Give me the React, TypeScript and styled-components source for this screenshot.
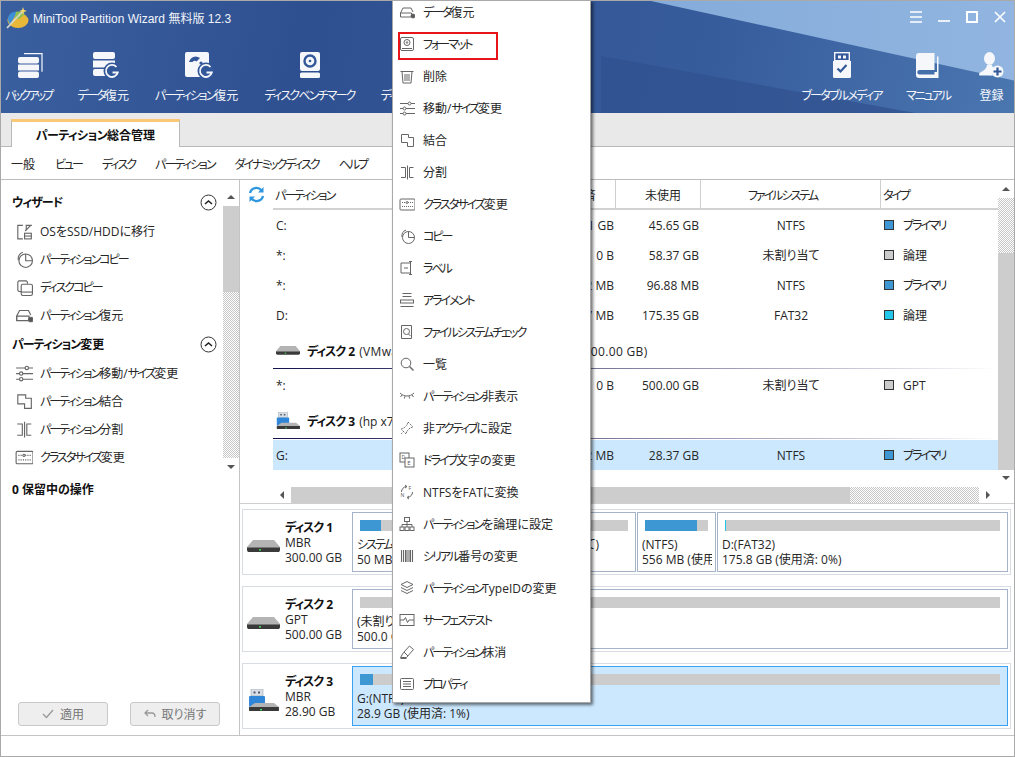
import React from 'react';
import styled, { createGlobalStyle } from 'styled-components';

const GlobalStyle = createGlobalStyle`
  html, body { margin: 0; padding: 0; background: #fff; }
  body {
    font-family: "Open Sans", "Noto Sans CJK JP", sans-serif;
    font-size: 12px;
    color: #262626;
    font-feature-settings: "palt";
  }
  * { box-sizing: border-box; }
`;

// the reference font sets katakana much narrower than any installed one
const Kana = styled.span`
  letter-spacing: var(--kana, -2px);
`;

const T = ({ children }: { children: string }) => (
  <>
    {children.split(/([\u30A0-\u30FF]+)/).map((part, i) =>
      i % 2 ? <Kana key={i}>{part}</Kana> : part
    )}
  </>
);

const Window = styled.div`
  position: relative;
  width: 1015px;
  height: 757px;
  border: 1px solid #a9a9a9;
  display: flex;
  flex-direction: column;
  overflow: hidden;
  background: #fff;
`;

/* header */
const Header = styled.header`
  position: relative;
  height: 112px;
  flex: none;
  color: #fff;
  background: linear-gradient(100deg, #3a5f9f 0%, #2f5090 30%, #375c9c 70%, #4a76b0 100%);
  overflow: hidden;
  &::before {
    content: '';
    position: absolute;
    inset: 0;
    background: linear-gradient(90deg, #6e9acf, #91b5e0);
    clip-path: polygon(650px 0, 1015px 0, 1015px 80px);
  }
  &::after {
    content: '';
    position: absolute;
    inset: 0;
    background: #31518f;
    opacity: 0.75;
    clip-path: polygon(600px 55px, 920px 113px, 600px 113px);
  }
`;

const TitleBar = styled.div`
  position: relative;
  z-index: 1;
  height: 32px;
  display: flex;
  align-items: center;
  padding: 0 8px 0 5px;
`;

const AppTitle = styled.span`
  margin-left: 4px;
  font-family: "Liberation Sans", "Noto Sans CJK JP", sans-serif;
  font-size: 12px;
  color: #f2f5fa;
`;

const WindowButtons = styled.div`
  margin-left: auto;
  display: flex;
  align-items: center;
  gap: 16px;
`;

const Toolbar = styled.div`
  position: relative;
  z-index: 1;
  margin-top: 18px;
  display: flex;
  padding: 0 10px 0 4px;
`;

const ToolGroup = styled.div<{ $right?: boolean }>`
  display: flex;
  gap: ${p => (p.$right ? 24 : 26)}px;
  margin-left: ${p => (p.$right ? 'auto' : '0')};
`;

const ToolItem = styled.div<{ $ml?: number }>`
  display: flex;
  flex-direction: column;
  align-items: center;
  margin-left: ${p => p.$ml ?? 0}px;
`;

const ToolIconBox = styled.div<{ $nudge?: number }>`
  height: 28px;
  display: flex;
  align-items: center;
  justify-content: center;
  margin-bottom: 8px;
  padding-left: ${p => (p.$nudge ?? 0) * 2}px;
`;

const ToolLabel = styled.span<{ $kana?: number }>`
  line-height: 18px;
  white-space: nowrap;
  color: #f4f6fa;
  ${p => (p.$kana !== undefined ? `--kana: ${p.$kana}px;` : '')}
`;

/* tabs and menu */
const TabBar = styled.div`
  height: 34px;
  flex: none;
  display: flex;
  align-items: flex-end;
  background: #e9e9e9;
  border-bottom: 1px solid #b9b9b9;
  padding-left: 10px;
`;

const Tab = styled.div`
  --kana: -0.6px;
  width: 169px;
  height: 28px;
  margin-bottom: -1px;
  display: flex;
  align-items: center;
  justify-content: center;
  font-weight: 700;
  color: #111;
  background: #fff;
  border: 1px solid #b9b9b9;
  border-bottom: 0;
  border-top: 3px solid #fbc976;
`;

const MenuBar = styled.nav`
  height: 33px;
  flex: none;
  display: flex;
  align-items: center;
  gap: 20px;
  padding: 1px 0 0 10px;
  border-bottom: 1px solid #bdbdbd;
`;

/* body */
const Body = styled.div`
  flex: 1;
  display: flex;
  min-height: 0;
`;

const Sidebar = styled.aside`
  width: 239px;
  flex: none;
  display: flex;
  flex-direction: column;
  border-right: 1px solid #c4c4c4;
`;

const SideScroll = styled.div`
  height: 295px;
  flex: none;
  display: flex;
  padding-top: 8px;
`;

const SideList = styled.div`
  flex: 1;
  min-width: 0;
`;

const SideRow = styled.div`
  height: 28px;
  display: flex;
  align-items: center;
  gap: 7px;
  padding-left: 14px;
  white-space: nowrap;
`;

const SideTitle = styled.div`
  --kana: -1px;
  height: 29px;
  display: flex;
  align-items: center;
  justify-content: space-between;
  padding: 0 6px 1px 11px;
  font-weight: 700;
  color: #111;
  ${SideRow} + & {
    margin-top: 1px;
  }
`;

const Pending = styled.div`
  --kana: -1px;
  height: 28px;
  display: flex;
  align-items: center;
  padding-left: 11px;
  font-weight: 700;
  color: #111;
`;

const ActionRow = styled.div`
  margin-top: auto;
  display: flex;
  gap: 22px;
  padding: 0 0 9px 17px;
`;

const ActionButton = styled.div`
  width: 90px;
  height: 24px;
  display: flex;
  align-items: center;
  justify-content: center;
  gap: 6px;
  background: #eee;
  border: 1px solid #c9c9c9;
  border-radius: 3px;
  color: #777;
`;

/* scrollbars */
const VBar = styled.div`
  width: 16px;
  flex: none;
  display: flex;
  flex-direction: column;
  align-items: stretch;
`;

const HBar = styled.div`
  height: 16px;
  flex: none;
  display: flex;
  margin-left: 33px;
`;

const Solid = styled.div<{ $size: number; $h?: boolean }>`
  flex: none;
  ${p => (p.$h ? `width: ${p.$size}px;` : `height: ${p.$size}px;`)}
  background: #cdcdcd;
`;

const Dither = styled.div<{ $size: number; $h?: boolean }>`
  flex: none;
  ${p => (p.$h ? `width: ${p.$size}px;` : `height: ${p.$size}px;`)}
  background: repeating-conic-gradient(#c6c6c6 0 25%, #fff 0 50%) 0 0 / 2px 2px;
`;

const ArrowBox = styled.div<{ $size: number; $h?: boolean }>`
  flex: none;
  display: flex;
  align-items: center;
  justify-content: center;
  ${p => (p.$h ? `width: ${p.$size}px;` : `height: ${p.$size}px;`)}
`;

const Arrow = styled.i<{ $dir: 'up' | 'down' | 'left' | 'right' }>`
  display: block;
  width: 0;
  height: 0;
  border-style: solid;
  border-color: transparent;
  ${p => p.$dir === 'up' && 'border-width: 0 4px 4px; border-bottom-color: #555;'}
  ${p => p.$dir === 'down' && 'border-width: 4px 4px 0; border-top-color: #555;'}
  ${p => p.$dir === 'left' && 'border-width: 4px 4px 4px 0; border-right-color: #555;'}
  ${p => p.$dir === 'right' && 'border-width: 4px 0 4px 4px; border-left-color: #555;'}
`;

/* main */
const Main = styled.main`
  flex: 1;
  min-width: 0;
  display: flex;
  flex-direction: column;
`;

const TableSection = styled.section`
  height: 324px;
  flex: none;
  display: flex;
  flex-direction: column;
  border-bottom: 1px solid #cfcfcf;
`;

const TableWrap = styled.div`
  flex: 1;
  display: flex;
  min-height: 0;
`;

const Table = styled.div`
  flex: 1;
  min-width: 0;
  position: relative;
  padding-left: 33px;
`;

const RefreshSlot = styled.div`
  position: absolute;
  left: 8px;
  top: 6px;
`;

const columns = '190px 75px 78px 85px 180px 1fr';

const HeadRow = styled.div`
  display: grid;
  grid-template-columns: ${columns};
  height: 30px;
  border-bottom: 2px solid #d2d2d2;
`;

const HeadCell = styled.div<{ $line?: boolean; $pl?: number; $pr?: number; $center?: boolean }>`
  display: flex;
  align-items: center;
  justify-content: ${p => (p.$center ? 'center' : 'flex-start')};
  padding: 2px ${p => p.$pr ?? 0}px 0 ${p => p.$pl ?? 2}px;
  border-right: ${p => (p.$line ? '1px solid #cfcfcf' : '0')};
  white-space: nowrap;
`;

const Row = styled.div<{ $selected?: boolean }>`
  display: grid;
  grid-template-columns: ${columns};
  height: 30px;
  align-items: center;
  background: ${p => (p.$selected ? '#cce8ff' : 'transparent')};
`;

const Cell = styled.div<{ $align?: string; $pr?: number; $pl?: number }>`
  text-align: ${p => p.$align ?? 'left'};
  padding-right: ${p => p.$pr ?? 0}px;
  padding-left: ${p => p.$pl ?? 0}px;
  white-space: nowrap;
`;

const TypeCell = styled.div`
  display: flex;
  align-items: center;
  gap: 9px;
  padding-left: 3px;
`;

const Swatch = styled.span<{ $color: string }>`
  width: 10px;
  height: 10px;
  background: ${p => p.$color};
  border: 1px solid #333;
`;

const DiskRow = styled.div`
  height: 39px;
  margin-bottom: 1px;
  padding: 3px 0 0 3px;
  display: flex;
  align-items: center;
  gap: 7px;
  white-space: nowrap;
  border-bottom: 1px solid;
  border-image: linear-gradient(90deg, #12124e, #b9b8cc 75%, #fff) 1;
`;

const DiskIconSlot = styled.div`
  width: 24px;
  display: flex;
  justify-content: center;
`;

const DiskName = styled.b`
  --kana: -1px;
  font-weight: 700;
  color: #111;
  margin-right: 4px;
`;

const DiskDetail = styled.span`
  letter-spacing: 0.33px;
`;

const DiskSection = styled.section`
  flex: 1;
  min-height: 0;
  display: flex;
  flex-direction: column;
  gap: 11px;
  padding: 5px 3px 0 2px;
`;

const DiskCard = styled.div`
  height: 66px;
  flex: none;
  display: flex;
  border: 1px solid #d8dde3;
  padding: 2px;
`;

const DiskInfo = styled.div`
  width: 107px;
  flex: none;
  display: flex;
  align-items: center;
  gap: 5px;
  padding-left: 2px;
`;

const DiskIconBox = styled.div`
  width: 33px;
  display: flex;
  justify-content: center;
  padding-top: 8px;
`;

const DiskText = styled.div`
  line-height: 15px;
  white-space: nowrap;
`;

const Frames = styled.div`
  flex: 1;
  min-width: 0;
  display: flex;
  gap: 1px;
`;

const Frame = styled.div<{ $w?: number; $selected?: boolean }>`
  ${p => (p.$w ? `width: ${p.$w}px; flex: none;` : 'flex: 1; min-width: 0;')}
  height: 60px;
  padding: 7px 7px 0;
  border: 1px solid ${p => (p.$selected ? '#3aa0f0' : '#a5b3c9')};
  background: ${p => (p.$selected ? '#cce8ff' : '#fff')};
`;

const Bar = styled.div`
  height: 11px;
  background: #cccccc;
`;

const BarFill = styled.div<{ $color: string }>`
  height: 100%;
  background: ${p => p.$color};
`;

const FrameText = styled.div`
  margin: 6px -4px 0 -3px;
  line-height: 15px;
  white-space: nowrap;
  overflow: hidden;
`;

const StatusBar = styled.footer`
  height: 21px;
  flex: none;
  border-top: 1px solid #c4c4c4;
`;

/* context menu */
const ContextMenu = styled.div`
  position: absolute;
  left: 391px;
  top: -1px;
  width: 199px;
  height: 703px;
  background: #fff;
  border: 1px solid #a8a8a8;
  box-shadow: 2px 2px 3px rgba(0, 0, 0, 0.55);
  overflow: hidden;
  z-index: 5;
`;

const MenuList = styled.div`
  margin-top: -5px;
`;

const MenuRow = styled.div<{ $marked?: boolean }>`
  position: relative;
  height: 32px;
  display: flex;
  align-items: center;
  gap: 8px;
  padding-left: 6px;
  white-space: nowrap;
  &::after {
    content: '';
    display: ${p => (p.$marked ? 'block' : 'none')};
    position: absolute;
    left: 5px;
    top: 4px;
    width: 96px;
    height: 24px;
    border: 2px solid #e8141c;
  }
`;

/* drawings */
const line = { fill: 'none', stroke: '#666', strokeWidth: 1 };

type IconName =
  | 'migrate' | 'pie' | 'diskcopy' | 'recover' | 'sliders' | 'merge' | 'split' | 'cluster'
  | 'format' | 'trash' | 'label' | 'align' | 'check' | 'search' | 'hide' | 'pin' | 'letter'
  | 'convert' | 'tree' | 'barcode' | 'layers' | 'surface' | 'eraser' | 'props';

const shapes: Record<IconName, React.ReactNode> = {
  migrate: <><path d="M7 3H2.5v12H7M10 7v-4h5" /><path d="M9 8l5-5" /><rect x="8.5" y="10" width="6" height="5" /><path d="M8.5 12.5h6" /></>,
  pie: <><circle cx="9.5" cy="9.5" r="6" /><path d="M9.5 3.5v6h6M3 9a6 6 0 0 1 4-7" /></>,
  diskcopy: <><path d="M6 12H3.5l-1-1V3.5l1-1H10l1 1V5" /><rect x="5.5" y="5.5" width="10" height="10" rx="1.5" /><path d="M5.5 12.5h10" /></>,
  recover: <><path d="M1.5 13V9l2.5-5h8l2 4" /><path d="M1.5 9h11v4h-11z" /><circle cx="14" cy="12" r="2" fill="#555" /></>,
  sliders: <><path d="M1 3.5h15M1 8.5h15M1 13.5h15" /><circle cx="10.5" cy="3.5" r="1.5" fill="#fff" /><circle cx="5.5" cy="8.5" r="1.5" fill="#fff" /><circle cx="5.5" cy="13.5" r="1.5" fill="#fff" /></>,
  merge: <path d="M2.5 2.5h7v3h5v9h-6v-4h-6z" />,
  split: <path d="M2 3.5h4.5v10H2M8.5 1.5v14M14.5 3.5H10.5v10h4" />,
  cluster: <><rect x="1" y="3" width="15" height="11" rx="1" /><path d="M3 6.5h4M9 6.5h5M3 10.5h11" strokeDasharray="1 1" /><circle cx="8" cy="6.5" r="1" /></>,
  format: <><rect x="1.5" y="1.5" width="13" height="13" rx="1.5" /><circle cx="8" cy="6.5" r="3" /><circle cx="8" cy="6.5" r=".8" /><path d="M3 12.5h10" /></>,
  trash: <><path d="M1.5 3.5h13M3 3.5l1 11.5h8l1-11.5M6 6v7M8 6v7M10 6v7" /></>,
  label: <><path d="M11 3H2v10h9M5 8h4" /><path d="M11.5 2v12M10 1.5h3M10 14.5h3" /></>,
  align: <><path d="M3.5 1.5h9M3.5 4.5h9" /><rect x="1.5" y="8" width="13" height="3" /><path d="M1.5 14.5h13" /></>,
  check: <><path d="M2.5 1.5h10v13h-10z" /><circle cx="7.5" cy="7.5" r="3" /><path d="M9.5 10l2 2" /></>,
  search: <><circle cx="7" cy="7" r="4.8" /><path d="M10.5 10.5l4 4" strokeWidth="1.4" /></>,
  hide: <><path d="M1 5c4 4 10 4 14 0" /><path d="M3 7L1.5 9M6 8.2l-.6 2.3M10 8.2l.6 2.3M13 7l1.5 2" /></>,
  pin: <path d="M9 2l5 5-3 1-3 3-1 3-5-5 3-1 3-3zM5 11l-3 3" strokeDasharray="1.5 1" />,
  letter: <><rect x="1" y="1" width="9" height="9" /><rect x="6" y="6" width="9" height="9" fill="#fff" /><text x="2.5" y="6.5" fontSize="5" stroke="none" fill="#555">D</text><text x="8.3" y="13" fontSize="6" stroke="none" fill="#555">E</text></>,
  convert: <><path d="M2.5 8a5.5 5.5 0 0 1 5-5.5M13.5 8a5.5 5.5 0 0 1-5 5.5M6 1l2 1.5L6 4M10 12l-2 1.5 2 1.5" /><text x="9.5" y="6" fontSize="5" stroke="none" fill="#555">F</text><text x="1.5" y="13" fontSize="5" stroke="none" fill="#555">N</text></>,
  tree: <><rect x="5.5" y="1.5" width="5" height="4" /><rect x="1" y="11" width="4" height="3.5" /><rect x="6" y="11" width="4" height="3.5" /><rect x="11" y="11" width="4" height="3.5" /><path d="M8 5.5V11M3 11V8.5h10V11" /></>,
  barcode: <path d="M2.5 2v12M4.5 2v12M6.5 2v12M8 2v12M10 2v12M11.5 2v12M13.5 2v12" strokeWidth="1.1" />,
  layers: <><path d="M8 1.5l6 3-6 3-6-3z" /><path d="M2 7.5l6 3 6-3M2 10.5l6 3 6-3" /></>,
  surface: <><rect x="1" y="2.5" width="14" height="11" /><path d="M1 8h4l1.5-2.5 2 5 1.5-2.5h5" /></>,
  eraser: <><path d="M1.5 13.5l3-5 6-6.5 4 3.5-7 8zM5 8l4 4" /><path d="M1.5 14.5h6" /></>,
  props: <><rect x="1.5" y="2.5" width="13" height="11" rx="1" /><path d="M4 5.5h8M4 8h8M4 10.5h8" /></>,
};

const LineIcon = ({ name, size = 16 }: { name: IconName; size?: number }) => (
  <svg width={size} height={size} viewBox="0 0 16 16" {...line} style={{ flex: 'none' }}>
    {shapes[name]}
  </svg>
);

const W = '#f5f7fb';
const BG = '#33589a';

const RecoverC = ({ cx, cy }: { cx: number; cy: number }) => (
  <>
    <circle cx={cx} cy={cy} r={8.5} fill={BG} />
    <path d={`M${cx + 4.5} ${cy - 4}A6 6 0 1 0 ${cx + 5.8} ${cy + 1.5}H${cx + 0.5}`} fill="none" stroke={W} strokeWidth={1.8} />
  </>
);

const BackupIcon = () => (
  <svg width="26" height="25" viewBox="0 0 26 25">
    <path d="M7 .7h18v18" fill="none" stroke={W} strokeWidth="1.2" />
    <rect x="1" y="4" width="21" height="6.5" rx="2" fill={W} />
    <rect x="1" y="11.5" width="21" height="6" rx=".5" fill={W} />
    <rect x="1" y="18.5" width="21" height="6.5" rx="2" fill={W} />
  </svg>
);

const DataRecoveryIcon = () => (
  <svg width="28" height="27" viewBox="0 0 28 27">
    <rect x="1" y="0" width="22" height="7" rx="2" fill={W} />
    <rect x="1" y="8.5" width="22" height="7" fill={W} />
    <rect x="1" y="17" width="22" height="7" rx="2" fill={W} />
    <RecoverC cx={20} cy={19} />
  </svg>
);

const PartitionRecoveryIcon = () => (
  <svg width="31" height="27" viewBox="0 0 31 27">
    <rect x="1" y="0" width="24" height="25" rx="2" fill={W} />
    <path d="M5 10a7 7 0 0 1 11-4l-3.5 3.5a3 3 0 0 0-4 .5z" fill={BG} />
    <circle cx="17" cy="11" r="1.6" fill={BG} />
    <RecoverC cx={22} cy={19} />
  </svg>
);

const BenchmarkIcon = () => (
  <svg width="20" height="26" viewBox="0 0 20 26">
    <rect x="0" y="0" width="20" height="19" rx="2" fill={W} />
    <circle cx="10" cy="9" r="5.5" fill="none" stroke={BG} strokeWidth="2.4" />
    <circle cx="10" cy="9" r="1.3" fill={BG} />
    <rect x="0" y="20.5" width="20" height="5.5" rx="1.5" fill={W} />
  </svg>
);

const UsbIcon = () => (
  <svg width="18" height="26" viewBox="0 0 18 26">
    <rect x="1.7" y=".7" width="14.6" height="8" fill={BG} stroke={W} strokeWidth="1.4" />
    <rect x="5" y="3.5" width="3" height="3" fill={W} />
    <rect x="10" y="3.5" width="3" height="3" fill={W} />
    <path d="M0 9h18v15.5a1.5 1.5 0 0 1-1.5 1.5h-15A1.5 1.5 0 0 1 0 24.500z" fill={W} />
    <path d="M4.500 16.500l3 3 6-6.500" fill="none" stroke={BG} strokeWidth="2.2" />
  </svg>
);

const BookIcon = () => (
  <svg width="23" height="25" viewBox="0 0 23 25">
    <path d="M3 0h15.500v17H3.500a1.800 1.800 0 0 0 0 4.500H18.500V19H21V3.500h1.500V25H3a3 3 0 0 1-3-3V3a3 3 0 0 1 3-3z" fill={W} />
  </svg>
);

const UserAddIcon = () => (
  <svg width="25" height="26" viewBox="0 0 25 26">
    <ellipse cx="10.500" cy="6.500" rx="5.500" ry="6.500" fill={W} />
    <path d="M8 13h5c.5 3 2 3.500 4 4.500-2.500 1-4 3-3.500 6H1c-1 0-1.300-1-.7-2 1-2 7-2.500 7.700-8.500z" fill={W} />
    <circle cx="18.500" cy="19.500" r="6" fill={W} />
    <path d="M18.500 15.500v8M14.500 19.500h8" stroke={BG} strokeWidth="2.200" />
  </svg>
);

const LogoIcon = () => (
  <svg width="23" height="23" viewBox="0 0 23 23">
    <ellipse cx="12" cy="14.500" rx="10.500" ry="7.500" fill="#e9b838" />
    <path d="M2 13c0-5 5-8 9-7l-3 6-4 6c-1-1-2-3-2-5z" fill="#3d8fd6" />
    <path d="M10 6c3-1 7 0 9 2l-6 5-4-1z" fill="#8cc152" />
    <path d="M1 22L17 5" stroke="#d7d7c8" strokeWidth="1.800" />
    <path d="M17 1l1 3 3 1-3 1-1 3-1-3-3-1 3-1z" fill="#f5d76a" />
  </svg>
);

const DriveIcon = ({ w = 33 }: { w?: number }) => (
  <svg width={w} height={w * 0.37} viewBox="0 0 33 12">
    <path d="M6 0h21l6 7v1H0V7z" fill="#b4b4b4" />
    <path d="M0 7.500h33V10a2 2 0 0 1-2 2H2a2 2 0 0 1-2-2z" fill="#3a3a3a" />
    <rect x="12" y="9" width="2" height="1.500" fill="#46d35a" />
  </svg>
);

const UsbDriveIcon = ({ w = 31 }: { w?: number }) => (
  <svg width={w} height={w * 0.74} viewBox="0 0 31 23">
    <rect x="3" y="0" width="12" height="7" fill="#d9dfe6" stroke="#9aa5b1" strokeWidth=".6" />
    <rect x="5.500" y="2.500" width="2" height="2" fill="#556" />
    <rect x="10" y="2.500" width="2" height="2" fill="#556" />
    <rect x="1" y="7" width="16" height="11" rx="1" fill="#2f86d8" />
    <path d="M7 14h19l5 4H1z" fill="#b4b4b4" />
    <path d="M1 18h30v3a2 2 0 0 1-2 2H3a2 2 0 0 1-2-2z" fill="#3a3a3a" />
    <rect x="12" y="20" width="2" height="1.500" fill="#46d35a" />
  </svg>
);

const Chevron = () => (
  <svg width="17" height="17" viewBox="0 0 17 17">
    <circle cx="8.500" cy="8.500" r="7.500" fill="none" stroke="#333" />
    <path d="M5 10l3.500-3 3.500 3" fill="none" stroke="#222" strokeWidth="1.600" />
  </svg>
);

const RefreshIcon = () => (
  <svg width="17" height="17" viewBox="0 0 17 17" fill="none" stroke="#2f97e0" strokeWidth="2.400">
    <path d="M2 7a6.500 6.500 0 0 1 11.500-2.500" />
    <path d="M15 10a6.500 6.500 0 0 1-11.500 2.500" />
    <path d="M15.500 1v5.500H10z M1.500 16v-5.500H7z" fill="#2f97e0" stroke="none" />
  </svg>
);

const WinGlyph = ({ kind }: { kind: 'menu' | 'min' | 'max' | 'close' }) => (
  <svg width="12" height="12" viewBox="0 0 12 12" stroke="#fff" strokeWidth="1.600" fill="none">
    {kind === 'menu' && <path d="M0 1h12M0 6h12M0 11h12" />}
    {kind === 'min' && <path d="M0 10h12" />}
    {kind === 'max' && <rect x="1" y="1" width="10" height="10" strokeWidth="2" />}
    {kind === 'close' && <path d="M1 1l10 10M11 1L1 11" />}
  </svg>
);

/* data */
const wizardItems: [IconName, string][] = [
  ['migrate', 'OSをSSD/HDDに移行'],
  ['pie', 'パーティションコピー'],
  ['diskcopy', 'ディスクコピー'],
  ['recover', 'パーティション復元'],
];

const changeItems: [IconName, string][] = [
  ['sliders', 'パーティション移動/サイズ変更'],
  ['merge', 'パーティション結合'],
  ['split', 'パーティション分割'],
  ['cluster', 'クラスタサイズ変更'],
];

const menuItems: [IconName, string][] = [
  ['recover', 'データ復元'],
  ['format', 'フォーマット'],
  ['trash', '削除'],
  ['sliders', '移動/サイズ変更'],
  ['merge', '結合'],
  ['split', '分割'],
  ['cluster', 'クラスタサイズ変更'],
  ['pie', 'コピー'],
  ['label', 'ラベル'],
  ['align', 'アライメント'],
  ['check', 'ファイルシステムチェック'],
  ['search', '一覧'],
  ['hide', 'パーティション非表示'],
  ['pin', '非アクティブに設定'],
  ['letter', 'ドライブ文字の変更'],
  ['convert', 'NTFSをFATに変換'],
  ['tree', 'パーティションを論理に設定'],
  ['barcode', 'シリアル番号の変更'],
  ['layers', 'パーティションTypeIDの変更'],
  ['surface', 'サーフェステスト'],
  ['eraser', 'パーティション抹消'],
  ['props', 'プロパティ'],
];

const BLUE = '#3c97d3';
const GRAY = '#cccccc';
const CYAN = '#22c6ea';

const ToolButton = ({ icon, label, kana, ml, nudge }: {
  icon: React.ReactNode; label: string; kana?: number; ml?: number; nudge?: number;
}) => (
  <ToolItem $ml={ml}>
    <ToolIconBox $nudge={nudge}>{icon}</ToolIconBox>
    <ToolLabel $kana={kana}><T>{label}</T></ToolLabel>
  </ToolItem>
);

const PartRow = ({ name, capacity, used, free, fs, color, type, selected }: {
  name: string; capacity: string; used: string; free: string; fs: string; color: string; type: string; selected?: boolean;
}) => (
  <Row $selected={selected}>
    <Cell $pl={3}>{name}</Cell>
    <Cell $align="right" $pr={2}>{capacity}</Cell>
    <Cell $align="right" $pr={2}>{used}</Cell>
    <Cell $align="right" $pr={2}>{free}</Cell>
    <Cell $align="center">{fs}</Cell>
    <TypeCell><Swatch $color={color} /><span><T>{type}</T></span></TypeCell>
  </Row>
);

const PartFrame = ({ w, fill, color, top, bottom, selected }: {
  w?: number; fill: number; color: string; top: string; bottom: string; selected?: boolean;
}) => (
  <Frame $w={w} $selected={selected}>
    <Bar><BarFill $color={color} style={{ width: `${fill}%` }} /></Bar>
    <FrameText><T>{top}</T><br />{bottom}</FrameText>
  </Frame>
);

const App = () => (
  <>
    <GlobalStyle />
    <Window>
      <Header>
        <TitleBar>
          <LogoIcon />
          <AppTitle>MiniTool Partition Wizard 無料版 12.3</AppTitle>
          <WindowButtons>
            <WinGlyph kind="menu" />
            <WinGlyph kind="min" />
            <WinGlyph kind="max" />
            <WinGlyph kind="close" />
          </WindowButtons>
        </TitleBar>
        <Toolbar>
          <ToolGroup>
            <ToolButton icon={<BackupIcon />} label="バックアップ" kana={-2.8} nudge={2} />
            <ToolButton icon={<DataRecoveryIcon />} label="データ復元" nudge={3} />
            <ToolButton icon={<PartitionRecoveryIcon />} label="パーティション復元" nudge={3} />
            <ToolButton icon={<BenchmarkIcon />} label="ディスクベンチマーク" kana={-1.8} nudge={1} />
            <ToolButton icon={<BenchmarkIcon />} label="ディスク使用状況分析" />
          </ToolGroup>
          <ToolGroup $right>
            <ToolButton icon={<UsbIcon />} label="ブータブルメディア" kana={-1.7} />
            <ToolButton icon={<BookIcon />} label="マニュアル" />
            <ToolButton icon={<UserAddIcon />} label="登録" ml={5} />
          </ToolGroup>
        </Toolbar>
      </Header>

      <TabBar><Tab><span><T>パーティション総合管理</T></span></Tab></TabBar>

      <MenuBar>
        {['一般', 'ビュー', 'ディスク', 'パーティション', 'ダイナミックディスク', 'ヘルプ'].map(item => (
          <span key={item}><T>{item}</T></span>
        ))}
      </MenuBar>

      <Body>
        <Sidebar>
          <SideScroll>
            <SideList>
              <SideTitle><span><T>ウィザード</T></span><Chevron /></SideTitle>
              {wizardItems.map(([icon, text]) => (
                <SideRow key={text}><LineIcon name={icon} size={18} /><span><T>{text}</T></span></SideRow>
              ))}
              <SideTitle><span><T>パーティション変更</T></span><Chevron /></SideTitle>
              {changeItems.map(([icon, text]) => (
                <SideRow key={text}><LineIcon name={icon} size={18} /><span><T>{text}</T></span></SideRow>
              ))}
            </SideList>
            <VBar>
              <ArrowBox $size={18}><Arrow $dir="up" /></ArrowBox>
              <Solid $size={86} />
              <Dither $size={166} />
              <ArrowBox $size={17}><Arrow $dir="down" /></ArrowBox>
            </VBar>
          </SideScroll>
          <Pending>0 保留中の操作</Pending>
          <ActionRow>
            <ActionButton>
              <svg width="12" height="10" viewBox="0 0 12 10" fill="none" stroke="#999" strokeWidth="1.300"><path d="M1 5l3.500 3.500L11 1" /></svg>
              適用
            </ActionButton>
            <ActionButton>
              <svg width="12" height="10" viewBox="0 0 12 10" fill="none" stroke="#999" strokeWidth="1.300"><path d="M4 1L1 4l3 3M1 4h7c2 0 3 1.500 3 4" /></svg>
              取り消す
            </ActionButton>
          </ActionRow>
        </Sidebar>

        <Main>
          <TableSection>
            <TableWrap>
              <Table>
                <RefreshSlot><RefreshIcon /></RefreshSlot>
                <HeadRow>
                  <HeadCell><span><T>パーティション</T></span></HeadCell>
                  <HeadCell>容量</HeadCell>
                  <HeadCell $line $center>使用済</HeadCell>
                  <HeadCell $line $center $pl={10}>未使用</HeadCell>
                  <HeadCell $line $center $pr={18}><span><T>ファイルシステム</T></span></HeadCell>
                  <HeadCell><span><T>タイプ</T></span></HeadCell>
                </HeadRow>
                <PartRow name="C:" capacity="59.46 GB" used="13.81 GB" free="45.65 GB" fs="NTFS" color={BLUE} type="プライマリ" />
                <PartRow name="*:" capacity="58.37 GB" used="0 B" free="58.37 GB" fs="未割り当て" color={GRAY} type="論理" />
                <PartRow name="*:" capacity="556.00 MB" used="459.12 MB" free="96.88 MB" fs="NTFS" color={BLUE} type="プライマリ" />
                <PartRow name="D:" capacity="175.46 GB" used="108.57 MB" free="175.35 GB" fs="FAT32" color={CYAN} type="論理" />
                <DiskRow>
                  <DiskIconSlot><DriveIcon w={24} /></DiskIconSlot>
                  <span><DiskName><T>ディスク 2</T></DiskName><DiskDetail>(VMware, VMware Virtual S SCSI, GPT, 500.00 GB)</DiskDetail></span>
                </DiskRow>
                <PartRow name="*:" capacity="500.00 GB" used="0 B" free="500.00 GB" fs="未割り当て" color={GRAY} type="GPT" />
                <DiskRow>
                  <DiskIconSlot><UsbDriveIcon w={24} /></DiskIconSlot>
                  <span><DiskName><T>ディスク 3</T></DiskName>(hp x750w USB, MBR, 28.90 GB)</span>
                </DiskRow>
                <PartRow selected name="G:" capacity="28.90 GB" used="537.12 MB" free="28.37 GB" fs="NTFS" color={BLUE} type="プライマリ" />
              </Table>
              <VBar>
                <ArrowBox $size={18}><Arrow $dir="up" /></ArrowBox>
                <Dither $size={55} />
                <Solid $size={217} />
                <ArrowBox $size={16}><Arrow $dir="down" /></ArrowBox>
              </VBar>
            </TableWrap>
            <HBar>
              <ArrowBox $h $size={18}><Arrow $dir="left" /></ArrowBox>
              <Solid $h $size={559} />
              <Dither $h $size={129} />
              <ArrowBox $h $size={18}><Arrow $dir="right" /></ArrowBox>
            </HBar>
          </TableSection>

          <DiskSection>
            <DiskCard>
              <DiskInfo>
                <DiskIconBox><DriveIcon /></DiskIconBox>
                <DiskText><DiskName><T>ディスク 1</T></DiskName><br />MBR<br />300.00 GB</DiskText>
              </DiskInfo>
              <Frames>
                <PartFrame w={70} fill={38} color={BLUE} top="システム" bottom="50 MB" />
                <PartFrame w={106} fill={23} color={BLUE} top="C:(NTFS)" bottom="59.5 GB" />
                <PartFrame w={106} fill={0} color={BLUE} top="(未割り当て)" bottom="58.4 GB" />
                <PartFrame w={79} fill={83} color={BLUE} top="(NTFS)" bottom="556 MB (使用" />
                <PartFrame fill={0.4} color={CYAN} top="D:(FAT32)" bottom="175.8 GB (使用済: 0%)" />
              </Frames>
            </DiskCard>
            <DiskCard>
              <DiskInfo>
                <DiskIconBox><DriveIcon /></DiskIconBox>
                <DiskText><DiskName><T>ディスク 2</T></DiskName><br />GPT<br />500.00 GB</DiskText>
              </DiskInfo>
              <Frames>
                <PartFrame fill={0} color={GRAY} top="(未割り当て)" bottom="500.0 GB" />
              </Frames>
            </DiskCard>
            <DiskCard>
              <DiskInfo>
                <DiskIconBox><UsbDriveIcon /></DiskIconBox>
                <DiskText><DiskName><T>ディスク 3</T></DiskName><br />MBR<br />28.90 GB</DiskText>
              </DiskInfo>
              <Frames>
                <PartFrame selected fill={2} color={BLUE} top="G:(NTFS)" bottom="28.9 GB (使用済: 1%)" />
              </Frames>
            </DiskCard>
          </DiskSection>
        </Main>
      </Body>

      <StatusBar />

      <ContextMenu>
        <MenuList>
          {menuItems.map(([icon, text]) => (
            <MenuRow key={text} $marked={text === 'フォーマット'}>
              <LineIcon name={icon} />
              <span><T>{text}</T></span>
            </MenuRow>
          ))}
        </MenuList>
      </ContextMenu>
    </Window>
  </>
);

export default App;
